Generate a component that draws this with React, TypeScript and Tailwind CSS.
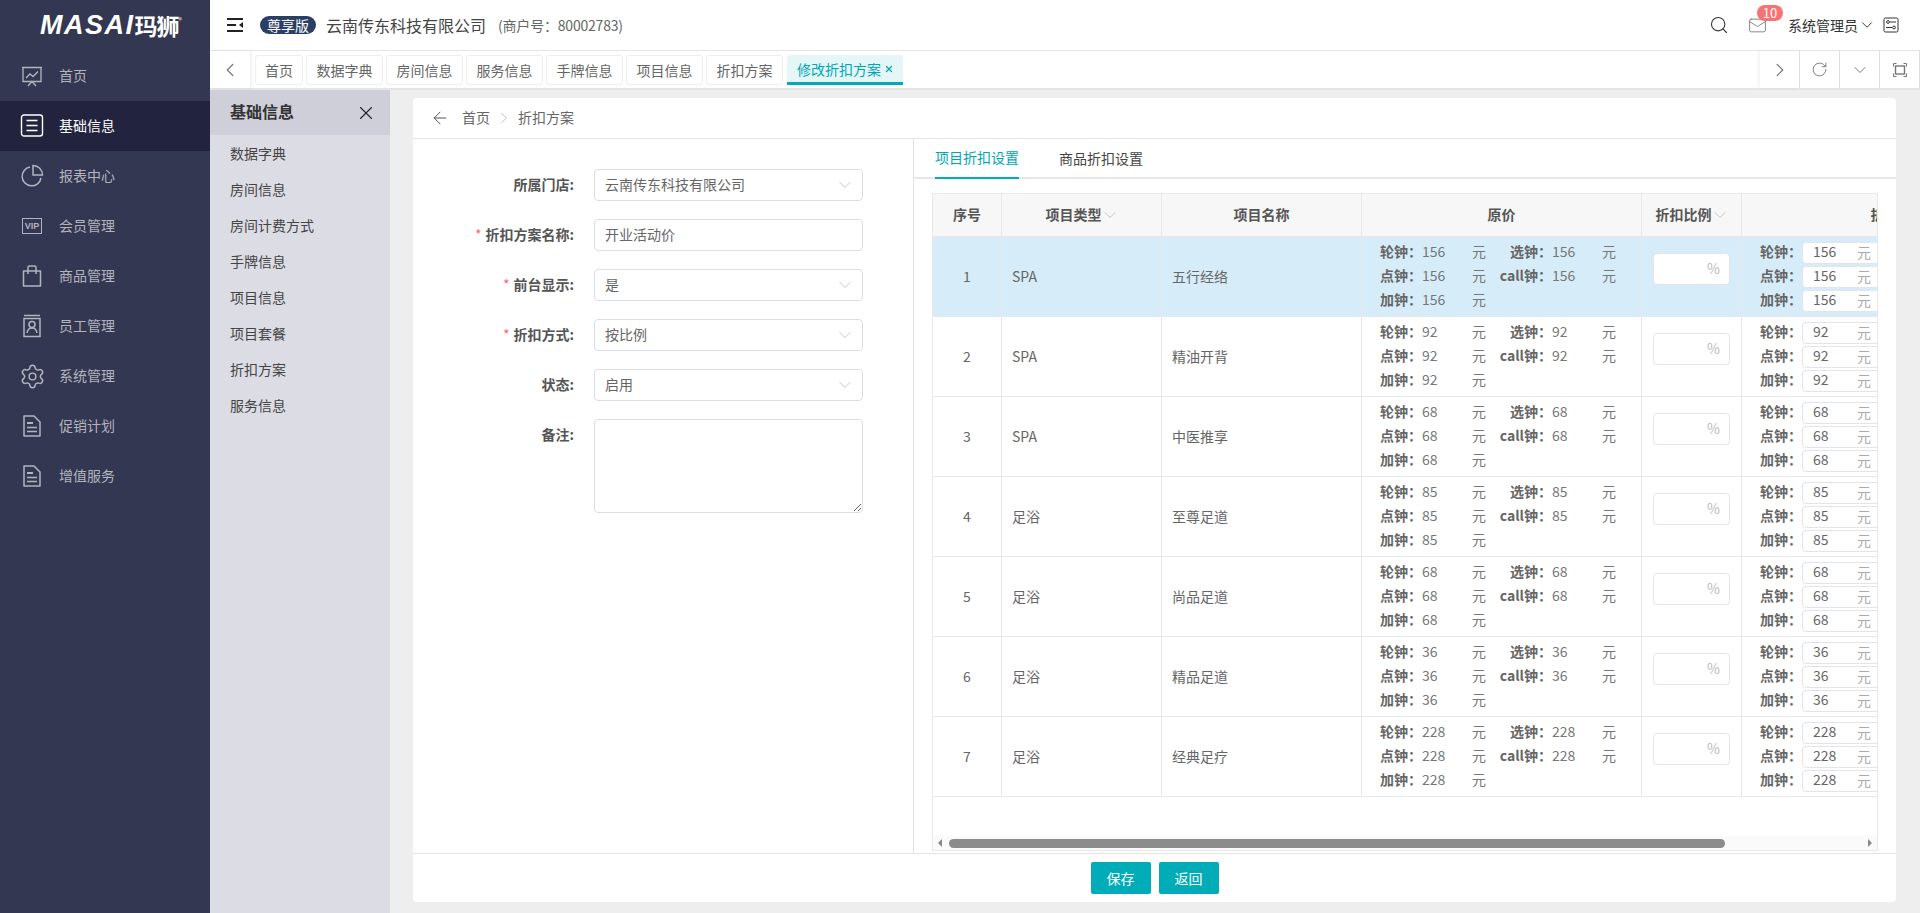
import React from "react";
import { Search, Mail, ChevronDown, ChevronLeft, ChevronRight, RotateCw, Settings, X, ArrowLeft } from "lucide-react";

const menu = [
  { name: "首页", icon: "monitor" },
  { name: "基础信息", icon: "list", active: true },
  { name: "报表中心", icon: "pie" },
  { name: "会员管理", icon: "vip" },
  { name: "商品管理", icon: "bag" },
  { name: "员工管理", icon: "contact" },
  { name: "系统管理", icon: "gear" },
  { name: "促销计划", icon: "file" },
  { name: "增值服务", icon: "file" },
];
const sub = ["数据字典", "房间信息", "房间计费方式", "手牌信息", "项目信息", "项目套餐", "折扣方案", "服务信息"];
const tabs = ["数据字典", "房间信息", "服务信息", "手牌信息", "项目信息", "折扣方案"];
const rows = [
  [1, "SPA", "五行经络", 156],
  [2, "SPA", "精油开背", 92],
  [3, "SPA", "中医推享", 68],
  [4, "足浴", "至尊足道", 85],
  [5, "足浴", "尚品足道", 68],
  [6, "足浴", "精品足道", 36],
  [7, "足浴", "经典足疗", 228],
] as const;

function MenuIcon({ kind }: { kind: string }) {
  const cls = "w-[24px] h-[24px]";
  if (kind === "monitor")
    return (
      <svg viewBox="0 0 24 24" className={cls} fill="none" stroke="currentColor" strokeWidth="1.3">
        <path d="M2 3.5h20M3 3.5v14h18v-14" />
        <path d="M6 14l4-4 3 2.5 5-5M8 22l4-4.5 4 4.5" />
      </svg>
    );
  if (kind === "list")
    return (
      <svg viewBox="0 0 24 24" className={cls} fill="none" stroke="currentColor" strokeWidth="1.4">
        <rect x="1.5" y="1" width="21" height="21" rx="2.5" />
        <path d="M6.5 6.5h11M6.5 11.5h11M6.5 16.5h11" />
      </svg>
    );
  if (kind === "pie")
    return (
      <svg viewBox="0 0 24 24" className={cls} fill="none" stroke="currentColor" strokeWidth="1.5">
        <path d="M10 3a9.5 9.5 0 1 0 11 11" />
        <path d="M13 1.5a9.5 9.5 0 0 1 9.5 9.5H13z" />
      </svg>
    );
  if (kind === "vip")
    return (
      <div className="w-[20px] h-[16px] border border-current flex items-center justify-center text-[9px] leading-none font-bold font-['Liberation_Sans',sans-serif]">
        VIP
      </div>
    );
  if (kind === "bag")
    return (
      <svg viewBox="0 0 24 24" className={cls} fill="none" stroke="currentColor" strokeWidth="1.5">
        <path d="M3.5 7h17v15h-17z" strokeLinejoin="round" />
        <path d="M8 10V3.5a1.5 1.5 0 0 1 1.5-1.5h5A1.5 1.5 0 0 1 16 3.5V10" />
      </svg>
    );
  if (kind === "contact")
    return (
      <svg viewBox="0 0 24 24" className={cls} fill="none" stroke="currentColor" strokeWidth="1.5">
        <path d="M4 1.5h16M4 4.5h16v18H4z" />
        <circle cx="12" cy="10.5" r="3" />
        <path d="M7 19c.5-3.5 2.5-5 5-5s4.5 1.5 5 5" />
      </svg>
    );
  if (kind === "gear") return <Settings className="w-[27px] h-[27px] shrink-0" strokeWidth={1.3} />;
  return (
    <svg viewBox="0 0 24 24" className={cls} fill="none" stroke="currentColor" strokeWidth="1.5">
      <path d="M4 2h10l6 6v14H4z" strokeLinejoin="round" />
      <path d="M7 9h6" strokeWidth="2" />
      <path d="M7 13.5h10M7 17.5h10" />
    </svg>
  );
}

function Label({ text, req }: { text: string; req?: boolean }) {
  return (
    <div className="w-[181px] text-right font-bold text-[#555] pr-[20px] leading-[30px] shrink-0">
      {req && <span className="text-[#f56c6c] font-normal mr-[4px]">*</span>}
      {text}:
    </div>
  );
}

function Select({ value }: { value: string }) {
  return (
    <div className="w-[269px] h-[32px] border border-[#dcdee6] rounded-[4px] pl-[10px] pr-[7px] flex items-center justify-between text-[#666]">
      <span className="pb-[1px]">{value}</span>
      <ChevronDown className="w-[20px] h-[20px] text-[#b8bac4]" strokeWidth={1} />
    </div>
  );
}

function PriceItem({ label, value }: { label: string; value: number }) {
  return (
    <div className="w-[130px] flex items-center h-[24px] pb-[1px]">
      <span className="w-[56px] text-right font-bold text-[#666] shrink-0">{label}：</span>
      <span className="w-[50px] shrink-0 text-[#777]">{value}</span>
      <span className="text-[#777]">元</span>
    </div>
  );
}

function EditItem({ label, value }: { label: string; value: number }) {
  return (
    <div className="flex items-center h-[24px]">
      <span className="w-[56px] text-right font-bold text-[#666] shrink-0 -ml-[14px] pb-[2px]">{label}：</span>
      <div className="w-[90px] h-[22px] bg-white border border-[#e2e4ea] rounded-[4px] flex items-center pl-[10px] shrink-0">
        <span className="w-[44px] text-[#666] pb-[2px]">{value}</span>
        <span className="text-[#aaa]">元</span>
      </div>
    </div>
  );
}

function Row({ n, type, name, price }: { n: number; type: string; name: string; price: number }) {
  const bg = n === 1 ? "bg-[#d6edf9]" : "bg-white";
  return (
    <tr className={`${bg} h-[80px]`}>
      <td className="border border-[#e6e8ec] text-center text-[#666] pb-[1px]">{n}</td>
      <td className="border border-[#e6e8ec] pl-[10px] text-[#666] pb-[1px]">{type}</td>
      <td className="border border-[#e6e8ec] pl-[10px] text-[#666] pb-[1px]">{name}</td>
      <td className="border border-[#e6e8ec] pl-[4px] pb-[1px]">
        <div className="flex flex-wrap w-[270px]">
          <PriceItem label="轮钟" value={price} />
          <PriceItem label="选钟" value={price} />
          <PriceItem label="点钟" value={price} />
          <PriceItem label="call钟" value={price} />
          <PriceItem label="加钟" value={price} />
        </div>
      </td>
      <td className="border border-[#e6e8ec] pl-[11px] pb-[16px]">
        <div className="w-[77px] h-[32px] bg-white border border-[#e2e4ea] rounded-[4px] flex items-center justify-end pr-[9px] text-[#bbb]">%</div>
      </td>
      <td className="border border-[#e6e8ec] pl-[18px]">
        <EditItem label="轮钟" value={price} />
        <EditItem label="点钟" value={price} />
        <EditItem label="加钟" value={price} />
      </td>
    </tr>
  );
}

function SortTh({ text }: { text: string }) {
  return (
    <span className="inline-flex items-center">
      {text}
      <ChevronDown className="w-[20px] h-[20px] text-[#b8bac4] -ml-[2px] -mr-[2px]" strokeWidth={1} />
    </span>
  );
}

export default function App() {
  return (
    <div className="w-[1920px] h-[913px] flex overflow-hidden bg-[#eeeeee] text-[14px] font-['Noto_Sans_CJK_SC','Noto_Sans',sans-serif]">
      <aside className="w-[210px] shrink-0 bg-[#343751] flex flex-col">
        <div className="h-[51px] flex items-center justify-center text-white pl-[12px]">
          <span className="text-[27px] font-bold italic tracking-[1.5px] font-['Liberation_Sans','Noto_Sans_CJK_SC',sans-serif]">MASAI</span>
          <span className="text-[23px] font-bold tracking-[-1px]">玛狮</span>
          <span className="text-[7px] self-start mt-[15px]">®</span>
        </div>
        <div className="flex flex-col">
          {menu.map((m) => (
            <div key={m.name} className={`h-[50px] flex items-center ${m.active ? "bg-[#22243f] text-white" : "text-[#b3b4bf]"}`}>
              <div className="w-[64px] pl-[20px] shrink-0 flex items-center">
                <div className="w-[24px] flex justify-center">
                  <MenuIcon kind={m.icon} />
                </div>
              </div>
              <span className="-ml-[5px] pb-[2px]">{m.name}</span>
            </div>
          ))}
        </div>
      </aside>

      <div className="flex-1 min-w-0 flex flex-col">
        <header className="h-[51px] shrink-0 bg-white border-b border-[#e5e5e5] flex items-center text-[#333]">
          <div className="ml-[17px] w-[16px] h-[14px] flex flex-col justify-between relative">
            <div className="h-[2px] bg-[#222]" />
            <div className="h-[2px] w-[9px] bg-[#222]" />
            <div className="h-[2px] bg-[#222]" />
            <div className="absolute right-0 top-[4px] w-0 h-0 border-y-[3px] border-y-transparent border-r-[4px] border-r-[#222]" />
          </div>
          <span className="ml-[17px] w-[56px] h-[18px] rounded-full bg-[#2b3f66] text-white flex items-center justify-center leading-none">尊享版</span>
          <span className="ml-[10px] text-[16px] text-[#444] pb-[1px]">云南传东科技有限公司</span>
          <span className="ml-[12px] text-[#666] tracking-[-0.2px]">(商户号：80002783)</span>
          <div className="ml-auto flex items-center relative">
            <Search className="w-[20px] h-[20px] text-[#333]" strokeWidth={1.3} />
            <div className="ml-[19px] relative w-[19px] h-[19px]">
              <Mail className="w-[19px] h-[19px] text-[#777]" strokeWidth={1.1} />
              <div className="absolute -top-[11px] left-[9px] w-[26px] h-[16px] rounded-full bg-[#f87272] text-white text-[13px] leading-none flex items-center justify-center">10</div>
            </div>
            <span className="ml-[21px] text-[#333]">系统管理员</span>
            <ChevronDown className="w-[18px] h-[18px] text-[#333]" strokeWidth={1.3} />
            <svg viewBox="0 0 16 16" className="ml-[7px] mr-[21px] w-[16px] h-[16px]" fill="none" stroke="#333" strokeWidth="1">
              <rect x="1" y="1" width="14" height="14" rx="1.5" />
              <circle cx="5" cy="5" r="1.4" />
              <path d="M7 5h6M3 10.5h6" />
              <circle cx="11" cy="10.5" r="1.4" />
            </svg>
          </div>
        </header>

        <div className="h-[39px] shrink-0 bg-white border-b-2 border-[#e5e5e5] flex items-stretch">
          <div className="w-[40px] shrink-0 flex items-center justify-center text-[#777] shadow-[2px_0_3px_rgba(0,0,0,0.06)]">
            <ChevronLeft className="w-[22px] h-[22px]" strokeWidth={1.3} />
          </div>
          <div className="flex gap-[3px] ml-[5px] pt-[4px] pb-[3px] text-[#666] flex-1">
            <div className="w-[48px] border border-[#eeeeee] rounded-[3px] flex items-center justify-center leading-none">首页</div>
            {tabs.map((t) => (
              <div key={t} className="w-[77px] border border-[#eeeeee] rounded-[3px] flex items-center justify-center leading-none">{t}</div>
            ))}
            <div className="w-[116px] bg-[#e5f6f7] text-[#00a8b5] border-b-[3px] border-[#00acb8] rounded-t-[3px] flex items-center justify-center leading-none ml-[1px] pl-[1px]">
              修改折扣方案
              <X className="w-[10px] h-[10px] ml-[3px]" strokeWidth={3} />
            </div>
          </div>
          <div className="w-[40px] flex items-center justify-center text-[#777] border-r border-[#ddd] shadow-[-2px_0_3px_rgba(0,0,0,0.05)]">
            <ChevronRight className="w-[22px] h-[22px]" strokeWidth={1.3} />
          </div>
          <div className="w-[40px] flex items-center justify-center text-[#777] border-r border-[#ddd]">
            <RotateCw className="w-[17px] h-[17px]" strokeWidth={1.3} />
          </div>
          <div className="w-[40px] flex items-center justify-center text-[#777] border-r border-[#ddd]">
            <ChevronDown className="w-[20px] h-[20px]" strokeWidth={1.2} />
          </div>
          <div className="w-[40px] flex items-center justify-center text-[#777] border-r border-[#ddd]">
            <svg viewBox="0 0 14 14" className="w-[14px] h-[14px]" fill="none" stroke="currentColor" strokeWidth="1">
              <path d="M.5 3.5v-3h3M10.5.5h3v3M13.5 10.5v3h-3M3.5 13.5h-3v-3" />
              <rect x="2.5" y="3" width="9" height="8" strokeWidth="1.4" />
            </svg>
          </div>
        </div>

        <div className="flex-1 min-h-0 flex">
          <div className="w-[180px] shrink-0 bg-[#dcdce5] text-[#444]">
            <div className="h-[45px] bg-[#cfcfda] flex items-center justify-between pl-[20px] pr-[13px]">
              <span className="text-[16px] font-bold text-[#333] pb-[3px]">基础信息</span>
              <X className="w-[22px] h-[22px] text-[#222]" strokeWidth={1.2} />
            </div>
            <div>
              {sub.map((s) => (
                <div key={s} className="h-[36px] pl-[20px] flex items-center">{s}</div>
              ))}
            </div>
          </div>

          <div className="flex-1 min-w-0 pl-[23px] pr-[24px] pt-[8px] pb-[11px]">
            <div className="h-full bg-white rounded-[4px] flex flex-col">
              <div className="h-[41px] shrink-0 border-b border-[#e4e4e4] flex items-center text-[#666]">
                <ArrowLeft className="w-[20px] h-[20px] ml-[17px] text-[#555]" strokeWidth={1.2} />
                <span className="ml-[12px] pb-[1px]">首页</span>
                <ChevronRight className="w-[18px] h-[18px] mx-[5px] text-[#aaa]" strokeWidth={1} />
                <span className="pb-[1px]">折扣方案</span>
              </div>

              <div className="flex-1 min-h-0 flex">
                <div className="w-[501px] shrink-0 border-r border-[#e4e4e4] pt-[30px] flex flex-col gap-[18px]">
                  <div className="flex"><Label text="所属门店" /><Select value="云南传东科技有限公司" /></div>
                  <div className="flex">
                    <Label text="折扣方案名称" req />
                    <div className="w-[269px] h-[32px] border border-[#dcdee6] rounded-[4px] pl-[10px] pb-[1px] flex items-center text-[#666]">开业活动价</div>
                  </div>
                  <div className="flex"><Label text="前台显示" req /><Select value="是" /></div>
                  <div className="flex"><Label text="折扣方式" req /><Select value="按比例" /></div>
                  <div className="flex"><Label text="状态" /><Select value="启用" /></div>
                  <div className="flex">
                    <Label text="备注" />
                    <textarea className="w-[269px] h-[94px] border border-[#dcdee6] rounded-[4px] outline-none" readOnly />
                  </div>
                </div>

                <div className="flex-1 min-w-0 flex flex-col">
                  <div className="h-[40px] shrink-0 border-b-2 border-[#e4e7ef] flex pl-[21px] gap-[40px] text-[#444]">
                    <div className="h-[40px] border-b-2 border-[#00acb8] text-[#00a8b5] flex items-center pb-[1px]">项目折扣设置</div>
                    <div className="h-[40px] flex items-center pb-[1px]">商品折扣设置</div>
                  </div>
                  <div className="flex-1 min-h-0 pl-[18px] pr-[18px] pt-[14px] pb-[2px]">
                    <div className="h-full border border-[#e6e8ec] flex flex-col overflow-hidden">
                      <div className="flex-1 min-h-0 overflow-hidden">
                        <table className="table-fixed w-[1109px] border-collapse -mt-[1px] -ml-[1px]">
                          <colgroup>
                            <col className="w-[69px]" />
                            <col className="w-[160px]" />
                            <col className="w-[200px]" />
                            <col className="w-[280px]" />
                            <col className="w-[100px]" />
                            <col className="w-[300px]" />
                          </colgroup>
                          <thead>
                            <tr className="h-[43px] bg-[#f7f7f8] font-bold text-[#555]">
                              <th className="border border-[#e6e8ec] pb-[1px]">序号</th>
                              <th className="border border-[#e6e8ec] pb-[1px]"><SortTh text="项目类型" /></th>
                              <th className="border border-[#e6e8ec] pb-[1px]">项目名称</th>
                              <th className="border border-[#e6e8ec] pb-[1px]">原价</th>
                              <th className="border border-[#e6e8ec] pb-[1px]"><SortTh text="折扣比例" /></th>
                              <th className="border border-[#e6e8ec] pb-[1px]">折扣价</th>
                            </tr>
                          </thead>
                          <tbody>
                            {rows.map((r) => (
                              <Row key={r[0]} n={r[0]} type={r[1]} name={r[2]} price={r[3]} />
                            ))}
                          </tbody>
                        </table>
                      </div>
                      <div className="h-[14px] shrink-0 bg-[#fafafa] flex items-center pl-[5px] pr-[5px] gap-[7px]">
                        <div className="w-0 h-0 border-y-[4px] border-y-transparent border-r-[4px] border-r-[#888]" />
                        <div className="flex-1 flex items-center">
                          <div className="w-[776px] h-[9px] rounded-full bg-[#8c8c8c]" />
                        </div>
                        <div className="w-0 h-0 border-y-[4px] border-y-transparent border-l-[4px] border-l-[#888]" />
                      </div>
                    </div>
                  </div>
                </div>
              </div>

              <div className="h-[49px] shrink-0 border-t border-[#e4e4e4] flex items-center justify-center gap-[8px] text-white">
                <div className="w-[60px] h-[32px] rounded-[2px] bg-[#00acb8] flex items-center justify-center">保存</div>
                <div className="w-[60px] h-[32px] rounded-[2px] bg-[#00acb8] flex items-center justify-center">返回</div>
              </div>
            </div>
          </div>
        </div>
      </div>
    </div>
  );
}
